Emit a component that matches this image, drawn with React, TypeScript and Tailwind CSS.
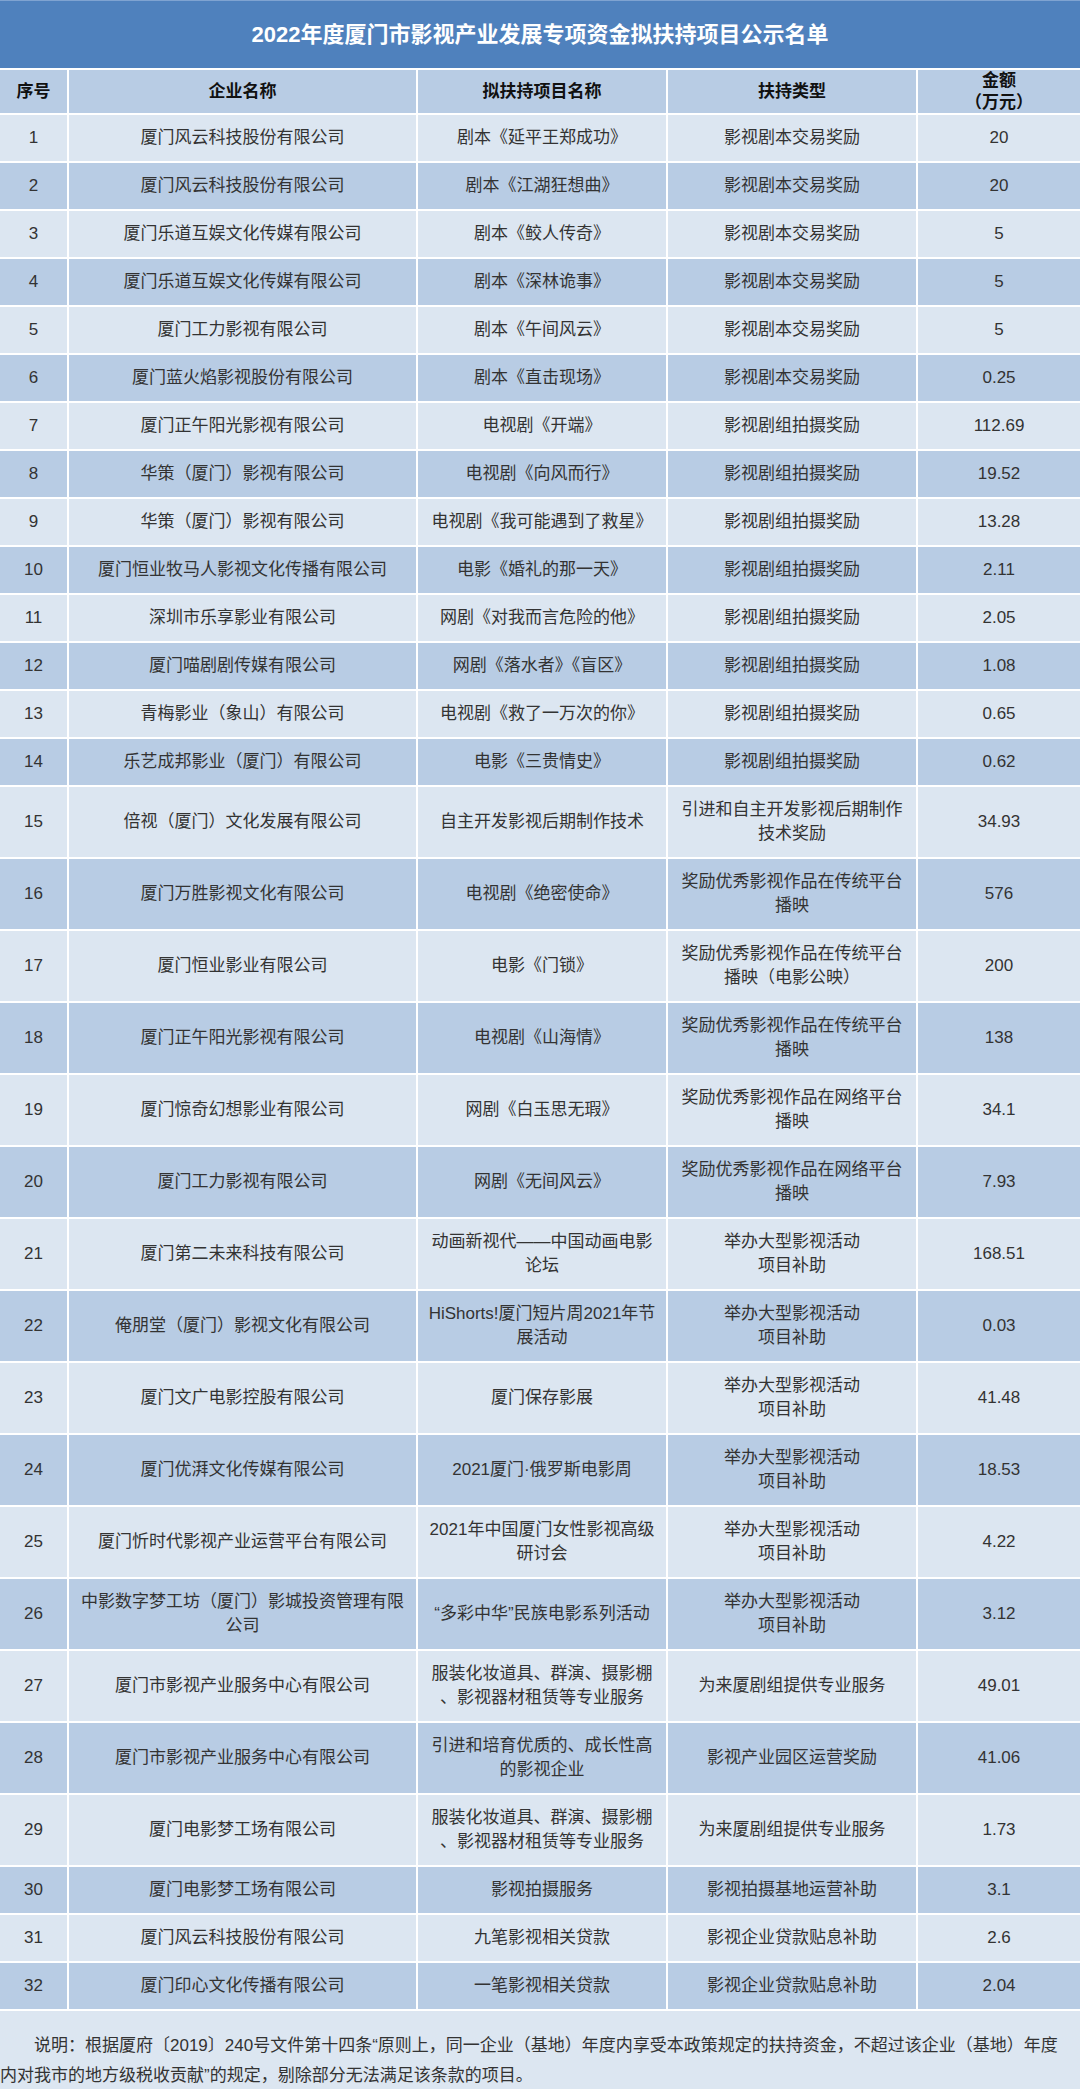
import React from "react";

type Row = {
  company: string;
  project: string;
  kind: string;
  amount: string;
};

const rows: Row[] = [
  { company: "厦门风云科技股份有限公司", project: "剧本《延平王郑成功》", kind: "影视剧本交易奖励", amount: "20" },
  { company: "厦门风云科技股份有限公司", project: "剧本《江湖狂想曲》", kind: "影视剧本交易奖励", amount: "20" },
  { company: "厦门乐道互娱文化传媒有限公司", project: "剧本《鲛人传奇》", kind: "影视剧本交易奖励", amount: "5" },
  { company: "厦门乐道互娱文化传媒有限公司", project: "剧本《深林诡事》", kind: "影视剧本交易奖励", amount: "5" },
  { company: "厦门工力影视有限公司", project: "剧本《午间风云》", kind: "影视剧本交易奖励", amount: "5" },
  { company: "厦门蓝火焰影视股份有限公司", project: "剧本《直击现场》", kind: "影视剧本交易奖励", amount: "0.25" },
  { company: "厦门正午阳光影视有限公司", project: "电视剧《开端》", kind: "影视剧组拍摄奖励", amount: "112.69" },
  { company: "华策（厦门）影视有限公司", project: "电视剧《向风而行》", kind: "影视剧组拍摄奖励", amount: "19.52" },
  { company: "华策（厦门）影视有限公司", project: "电视剧《我可能遇到了救星》", kind: "影视剧组拍摄奖励", amount: "13.28" },
  { company: "厦门恒业牧马人影视文化传播有限公司", project: "电影《婚礼的那一天》", kind: "影视剧组拍摄奖励", amount: "2.11" },
  { company: "深圳市乐享影业有限公司", project: "网剧《对我而言危险的他》", kind: "影视剧组拍摄奖励", amount: "2.05" },
  { company: "厦门喵剧剧传媒有限公司", project: "网剧《落水者》《盲区》", kind: "影视剧组拍摄奖励", amount: "1.08" },
  { company: "青梅影业（象山）有限公司", project: "电视剧《救了一万次的你》", kind: "影视剧组拍摄奖励", amount: "0.65" },
  { company: "乐艺成邦影业（厦门）有限公司", project: "电影《三贵情史》", kind: "影视剧组拍摄奖励", amount: "0.62" },
  { company: "倍视（厦门）文化发展有限公司", project: "自主开发影视后期制作技术", kind: "引进和自主开发影视后期制作\n技术奖励", amount: "34.93" },
  { company: "厦门万胜影视文化有限公司", project: "电视剧《绝密使命》", kind: "奖励优秀影视作品在传统平台\n播映", amount: "576" },
  { company: "厦门恒业影业有限公司", project: "电影《门锁》", kind: "奖励优秀影视作品在传统平台\n播映（电影公映）", amount: "200" },
  { company: "厦门正午阳光影视有限公司", project: "电视剧《山海情》", kind: "奖励优秀影视作品在传统平台\n播映", amount: "138" },
  { company: "厦门惊奇幻想影业有限公司", project: "网剧《白玉思无瑕》", kind: "奖励优秀影视作品在网络平台\n播映", amount: "34.1" },
  { company: "厦门工力影视有限公司", project: "网剧《无间风云》", kind: "奖励优秀影视作品在网络平台\n播映", amount: "7.93" },
  { company: "厦门第二未来科技有限公司", project: "动画新视代——中国动画电影\n论坛", kind: "举办大型影视活动\n项目补助", amount: "168.51" },
  { company: "俺朋堂（厦门）影视文化有限公司", project: "HiShorts!厦门短片周2021年节\n展活动", kind: "举办大型影视活动\n项目补助", amount: "0.03" },
  { company: "厦门文广电影控股有限公司", project: "厦门保存影展", kind: "举办大型影视活动\n项目补助", amount: "41.48" },
  { company: "厦门优湃文化传媒有限公司", project: "2021厦门·俄罗斯电影周", kind: "举办大型影视活动\n项目补助", amount: "18.53" },
  { company: "厦门忻时代影视产业运营平台有限公司", project: "2021年中国厦门女性影视高级\n研讨会", kind: "举办大型影视活动\n项目补助", amount: "4.22" },
  { company: "中影数字梦工坊（厦门）影城投资管理有限\n公司", project: "“多彩中华”民族电影系列活动", kind: "举办大型影视活动\n项目补助", amount: "3.12" },
  { company: "厦门市影视产业服务中心有限公司", project: "服装化妆道具、群演、摄影棚\n、影视器材租赁等专业服务", kind: "为来厦剧组提供专业服务", amount: "49.01" },
  { company: "厦门市影视产业服务中心有限公司", project: "引进和培育优质的、成长性高\n的影视企业", kind: "影视产业园区运营奖励", amount: "41.06" },
  { company: "厦门电影梦工场有限公司", project: "服装化妆道具、群演、摄影棚\n、影视器材租赁等专业服务", kind: "为来厦剧组提供专业服务", amount: "1.73" },
  { company: "厦门电影梦工场有限公司", project: "影视拍摄服务", kind: "影视拍摄基地运营补助", amount: "3.1" },
  { company: "厦门风云科技股份有限公司", project: "九笔影视相关贷款", kind: "影视企业贷款贴息补助", amount: "2.6" },
  { company: "厦门印心文化传播有限公司", project: "一笔影视相关贷款", kind: "影视企业贷款贴息补助", amount: "2.04" },
];

const Cell = ({ w, children }: { w: string; children: React.ReactNode }) => (
  <div className={`${w} flex shrink-0 items-center justify-center text-center whitespace-pre-line`}>
    {children}
  </div>
);

export default function App() {
  return (
    <div
      className="w-[1080px] bg-white text-[17px] leading-[24px] text-[#333]"
      style={{ fontFamily: '"Liberation Sans", "Noto Sans CJK SC", sans-serif' }}
    >
      <div className="flex flex-col gap-[2px]">
        <div className="flex h-[68px] items-center justify-center border-t border-[#7fa3d1] bg-[#4f81bd] text-[22px] font-bold text-white">
          2022年度厦门市影视产业发展专项资金拟扶持项目公示名单
        </div>

        <div className="flex h-[43px] gap-[2px] bg-white font-bold text-[#111]">
          <Cell w="w-[67px] bg-[#b8cce4]">序号</Cell>
          <Cell w="w-[347px] bg-[#b8cce4]">企业名称</Cell>
          <Cell w="w-[248px] bg-[#b8cce4]">拟扶持项目名称</Cell>
          <Cell w="w-[248px] bg-[#b8cce4]">扶持类型</Cell>
          <Cell w="w-[162px] bg-[#b8cce4] leading-[22px]">{"金额\n（万元）"}</Cell>
        </div>

        {rows.map((r, i) => {
          const twoLine = i >= 14 && i <= 28;
          const bg = i % 2 === 0 ? "bg-[#dce6f1]" : "bg-[#b8cce4]";
          return (
            <div key={i} className={`flex gap-[2px] ${twoLine ? "h-[70px]" : "h-[46px]"}`}>
              <div className={`w-[67px] shrink-0 flex items-center justify-center ${bg}`}>{i + 1}</div>
              <div className={`w-[347px] shrink-0 flex items-center justify-center text-center whitespace-pre-line ${bg}`}>
                {r.company}
              </div>
              <div className={`w-[248px] shrink-0 flex items-center justify-center text-center whitespace-pre-line ${bg}`}>
                {r.project}
              </div>
              <div className={`w-[248px] shrink-0 flex items-center justify-center text-center whitespace-pre-line ${bg}`}>
                {r.kind}
              </div>
              <div className={`w-[162px] shrink-0 flex items-center justify-center ${bg}`}>{r.amount}</div>
            </div>
          );
        })}

        <div className="h-[78px] bg-[#dce6f1] pt-[20px] text-[17px] leading-[30px] text-[#333]">
          <p className="[text-indent:2em]">
            说明：根据厦府〔2019〕240号文件第十四条“原则上，同一企业（基地）年度内享受本政策规定的扶持资金，不超过该企业（基地）年度
            <br />
            <span className="inline-block [text-indent:0]">内对我市的地方级税收贡献”的规定，剔除部分无法满足该条款的项目。</span>
          </p>
        </div>
      </div>
    </div>
  );
}
